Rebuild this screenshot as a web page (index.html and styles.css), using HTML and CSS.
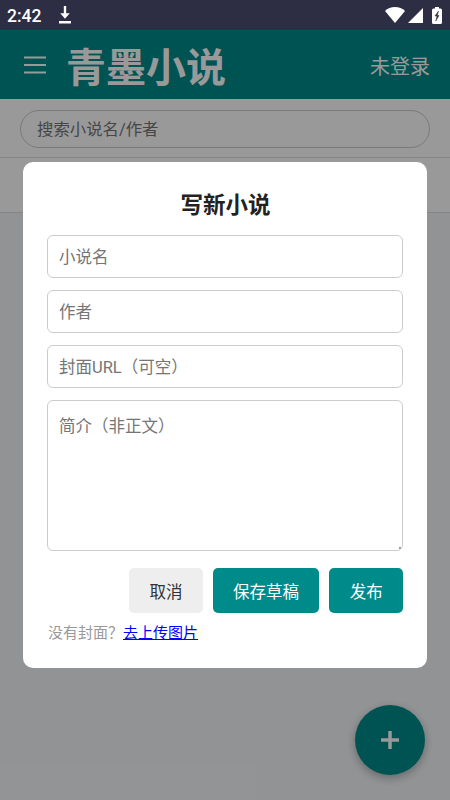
FILE: index.html
```html
<!DOCTYPE html>
<html lang="zh-CN">
<head>
  <meta charset="UTF-8">
  <meta name="viewport" content="width=device-width, initial-scale=1.0">
  <title>青墨小说</title>
  <link rel="stylesheet" href="styles.css">
</head>
<body>

  <div class="statusbar">
    <span class="time">2:42</span>
    <svg class="download" width="14" height="18" viewBox="0 0 14 18">
      <path d="M7 0v9M1 16.2h12" fill="none" stroke="#fff" stroke-width="2.400"/>
      <path d="M2.200 7.2h9.600L7 12.800z" fill="#fff"/>
    </svg>
    <div class="status-icons">
      <svg width="20" height="16" viewBox="0 0 20 16"><path d="M10 16 0 4C2.5 1.5 6 0 10 0s7.500 1.500 10 4z" fill="#fff"/></svg>
      <svg width="15" height="15" viewBox="0 0 15 15"><path d="M15 0v15H0z" fill="#fff"/></svg>
      <svg class="battery" width="10" height="17" viewBox="0 0 10 17">
        <path d="M3 0h4v1.500h1.500Q10 1.500 10 3v12.500Q10 17 8.500 17h-7Q0 17 0 15.500V3q0-1.500 1.500-1.500H3z" fill="#fff"/>
        <path d="M6.500 4 3 9h2l-1.200 5L7 8.500H5.200z" fill="#2d2d44" stroke="#2d2d44" stroke-width=".5"/>
      </svg>
    </div>
  </div>

  <div class="page">
    <header>
      <svg class="menu" width="24" height="20" viewBox="0 0 24 20"><path d="M1 2.500h22M1 10h22M1 17.500h22" stroke="#fff" stroke-width="2"/></svg>
      <h1>青墨小说</h1>
      <span class="login">未登录</span>
    </header>
    <div class="search">
      <input type="text" placeholder="搜索小说名/作者">
    </div>
    <div class="tabs"></div>

    <button class="fab" aria-label="写新小说">
      <svg width="18" height="18" viewBox="0 0 18 18"><path d="M9 0v18M0 9h18" stroke="#fff" stroke-width="3.500"/></svg>
    </button>

    <div class="overlay">
      <div class="modal">
        <h2>写新小说</h2>
        <input type="text" placeholder="小说名">
        <input type="text" placeholder="作者">
        <input type="text" placeholder="封面URL（可空）">
        <textarea placeholder="简介（非正文）"></textarea>
        <div class="actions">
          <button class="btn cancel">取消</button>
          <button class="btn">保存草稿</button>
          <button class="btn">发布</button>
        </div>
        <div class="tip">没有封面？<a href="#">去上传图片</a></div>
      </div>
    </div>
  </div>

</body>
</html>
```

FILE: styles.css
```css
* { box-sizing: border-box; margin: 0; padding: 0; }
body { height: 800px; overflow: hidden; display: flex; flex-direction: column; font-family: Roboto, "Noto Sans CJK SC", sans-serif; color: #222; }
input, textarea, button { font-family: inherit; outline: none; }
svg { display: block; }

.statusbar { height: 30px; flex: none; display: flex; align-items: center; padding: 0 8px 0 7px; background: #2d2d44; color: #fff; }
.time { font-size: 17.500px; font-weight: 500; width: 51px; padding-top: 1px; }
.status-icons { margin-left: auto; display: flex; align-items: center; gap: 3px; }
.battery { margin-left: 6px; }

.page { position: relative; flex: 1; background: #f4f6f8; }
header { height: 69px; display: flex; align-items: center; padding: 0 20px 0 23px; background: #008b8b; color: #fff; }
h1 { margin-left: 19px; padding-top: 8px; font-size: 40px; line-height: 60px; font-weight: bold; }
.login { margin-left: auto; padding-top: 2px; font-size: 20px; }
.search { height: 59px; padding: 11px 20px 0; background: #fff; border-bottom: 1px solid #ddd; }
.search input { display: block; width: 100%; height: 38px; padding: 0 16px; border: 1px solid #ccc; border-radius: 19px; background: #fff; font-size: 16.400px; }
.tabs { height: 55px; background: #fff; border-bottom: 1px solid #ddd; }
::placeholder { color: #757575; }

.fab { position: absolute; right: 25px; bottom: 25px; width: 70px; height: 70px; display: flex; align-items: center; justify-content: center; border: none; border-radius: 50%; background: #008b8b; box-shadow: 0 3px 10px rgba(0,0,0,0.3); }

.overlay { position: absolute; inset: 0; display: flex; align-items: center; justify-content: center; background: rgba(0,0,0,0.4); }
.modal { width: 404px; height: 506px; padding: 25px 24px 0; border-radius: 10px; background: #fff; }
.modal h2 { height: 36px; margin-bottom: 12px; padding-left: 1px; text-align: center; font-size: 22.500px; line-height: 36px; }
.modal input, .modal textarea { display: block; width: 100%; border: 1px solid #ccc; border-radius: 6px; padding: 0 11px; font-size: 16.500px; background: #fff; }
.modal input { height: 43px; padding-top: 2px; margin-bottom: 12px; }
.modal textarea { height: 151px; padding-top: 12px; resize: none; background: linear-gradient(#999, #999) right 1px bottom 1px / 2px 2px no-repeat #fff; }
.actions { display: flex; justify-content: flex-end; gap: 10px; margin-top: 17px; }
.btn { height: 45px; padding: 0 20.300px; border: none; border-radius: 5px; background: #008b8b; color: #fff; font-size: 16.500px; }
.cancel { background: #eee; color: #333; }
.tip { margin-top: 9px; padding-left: 1px; font-size: 15px; line-height: 23px; color: #999; }
.tip a { color: #00f; }
```
